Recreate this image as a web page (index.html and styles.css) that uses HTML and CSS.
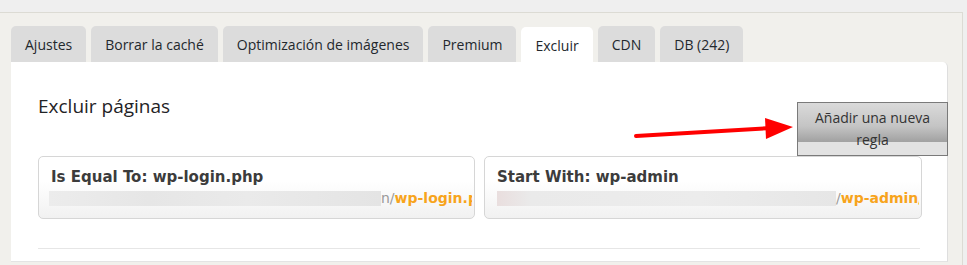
FILE: index.html
```html
<!DOCTYPE html>
<html lang="es">
<head>
    <meta charset="UTF-8">
    <title>Excluir</title>
    <link rel="stylesheet" href="styles.css">
</head>
<body>
    <div class="wrap">
        <div class="tabs">
            <div class="tab">Ajustes</div>
            <div class="tab">Borrar la caché</div>
            <div class="tab">Optimización de imágenes</div>
            <div class="tab">Premium</div>
            <div class="tab active">Excluir</div>
            <div class="tab">CDN</div>
            <div class="tab">DB (242)</div>
        </div>
        <div class="panel">
            <div class="head">
                <h2>Excluir páginas</h2>
                <button class="add-btn">Añadir una nueva regla</button>
            </div>
            <div class="rules">
                <div class="rule">
                    <div class="rule-title">Is Equal To: wp-login.php</div>
                    <div class="rule-url"><span class="blur blur-1"></span><span class="slash">n/</span><span class="path">wp-login.php</span></div>
                </div>
                <div class="rule">
                    <div class="rule-title">Start With: wp-admin</div>
                    <div class="rule-url"><span class="blur blur-2"></span><span class="slash">/</span><span class="path">wp-admin/</span></div>
                </div>
            </div>
            <hr class="sep">
            <svg class="arrow" width="170" height="30" viewBox="0 0 170 30">
                <line x1="4" y1="23" x2="140" y2="15" stroke="#f00" stroke-width="4" stroke-linecap="round"/>
                <polygon points="133,5 161,14 134,26" fill="#f00"/>
            </svg>
        </div>
    </div>
</body>
</html>
```

FILE: styles.css
```css
body {
    margin: 0;
    background: #efefef;
    font-family: "Open Sans", "Noto Sans", sans-serif;
    color: #23282d;
    overflow: hidden;
}
.wrap {
    margin-top: 12px;
    width: 951px;
    height: 239px;
    padding: 13px 0 0 11px;
    background: #f1f0ec;
    border-top: 1px solid #dcdbd4;
    border-right: 1px solid #dcdbd4;
}
.tabs {
    display: flex;
    gap: 5px;
    align-items: flex-end;
}
.tab {
    background: #dcdcdc;
    height: 36px;
    line-height: 37px;
    padding: 0 14px;
    border-radius: 5px 5px 0 0;
    font-size: 14px;
    color: #23282d;
}
.tab.active {
    background: #fff;
    margin-bottom: -1px;
    position: relative;
}
.panel {
    position: relative;
    box-sizing: border-box;
    width: 937px;
    height: 200px;
    padding: 32px 0 0 27px;
    background: #fff;
    border-right: 1px solid #dedede;
    border-bottom: 1px solid #e4e4e4;
    border-radius: 0 5px 0 0;
}
.head {
    display: flex;
    justify-content: space-between;
    align-items: flex-start;
}
.head h2 {
    margin: 0;
    font-size: 19px;
    line-height: 24px;
    font-weight: 400;
    color: #1f2326;
}
.add-btn {
    margin-top: 8px;
    margin-right: -1px;
    width: 151px;
    height: 54px;
    padding: 0 12px;
    font-family: inherit;
    font-size: 14px;
    line-height: 22px;
    color: #333;
    border: 1px solid #7a7a7a;
    background: linear-gradient(#dadada 0%, #c4c4c4 45%, #a3a3a3 73%, #a0a0a0 74%, #e2e2e2 75%, #e2e2e2 100%);
}
.rules {
    display: grid;
    grid-template-columns: 437px 438px;
    gap: 9px;
}
.rule {
    height: 63px;
    box-sizing: border-box;
    padding: 9px 2px 0 12px;
    border: 1px solid #d6d6d6;
    border-radius: 5px;
    background: linear-gradient(#fff 40%, #f1f1f1 100%);
    overflow: hidden;
    font-family: "DejaVu Sans", Verdana, sans-serif;
}
.rule-title {
    font-size: 15px;
    font-weight: bold;
    color: #3c3c3c;
    line-height: 22px;
}
.rule-url {
    display: flex;
    align-items: center;
    margin-top: 1px;
    margin-left: -2px;
    white-space: nowrap;
    overflow: hidden;
    font-size: 14px;
    line-height: 18px;
    font-weight: bold;
}
.blur {
    flex: none;
    height: 15px;
    background: linear-gradient(90deg, #ececec, #e6e6e6 30%, #eaeaea 60%, #e4e4e4 100%);
}
.blur-1 { width: 332px; }
.blur-2 {
    width: 339px;
    margin-left: 2px;
    background: linear-gradient(90deg, #e9dede, #eaeaea 10%, #ececec 60%, #e6e6e6 100%);
}
.slash {
    color: #9a9a9a;
    font-weight: normal;
}
.path {
    color: #f7a41c;
}
.sep {
    margin: 29px 27px 0 0;
    border: none;
    border-top: 1px solid #e6e6e6;
}
.arrow {
    position: absolute;
    left: 621px;
    top: 51px;
}
```
